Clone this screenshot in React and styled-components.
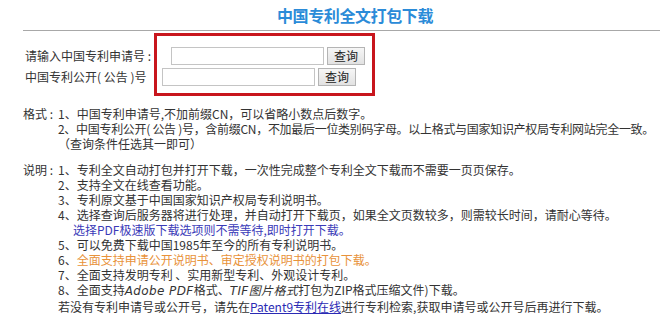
import React from "react";
import styled, { createGlobalStyle } from "styled-components";

const GlobalStyle = createGlobalStyle`
  html, body {
    margin: 0;
    padding: 0;
    background: #fff;
  }
  body {
    font-family: "Microsoft YaHei", "Noto Sans CJK SC", "Noto Sans", sans-serif;
    font-size: 12px;
    color: #333;
  }
`;

const Page = styled.div`
  width: 660px;
  height: 323px;
  overflow: hidden;
  padding-top: 6px;
  box-sizing: border-box;
`;

const Title = styled.h1`
  margin: 0 0 0 277px;
  font-size: 16px;
  line-height: 19px;
  font-weight: bold;
  letter-spacing: -0.4px;
  color: #2b8bd8;
`;

const Rule = styled.hr`
  margin: 5px 0 0 23px;
  border: 0;
  border-top: 1px solid #a8a8a8;
  height: 0;
`;

const Form = styled.div`
  display: flex;
  margin-top: 2px;
`;

const Labels = styled.div`
  display: flex;
  flex-direction: column;
  gap: 3px;
  width: 129px;
  padding: 14px 0 0 25px;
`;

const Label = styled.div`
  height: 18px;
  line-height: 18px;
  white-space: nowrap;
`;

const RedBox = styled.div`
  box-sizing: border-box;
  width: 221px;
  height: 63px;
  border: 3px solid #c8161d;
  padding-top: 11px;
  display: flex;
  flex-direction: column;
  gap: 3px;
`;

const InputRow = styled.div`
  display: flex;
  gap: 3px;
  padding-left: ${(p) => p.$indent}px;
`;

const TextInput = styled.input`
  width: 153px;
  height: 18px;
  box-sizing: border-box;
  border: 1px solid #c4c4c4;
  background: #fff;
  margin: 0;
  padding: 0 2px;
`;

const QueryButton = styled.button`
  width: 38px;
  height: 18px;
  padding: 0;
  margin: 0;
  border: 1px solid #b4b4b4;
  background: linear-gradient(#f6f6f6, #e2e2e2);
  font-family: inherit;
  font-size: 12px;
  line-height: 16px;
  color: #222;
`;

const Section = styled.div`
  display: grid;
  grid-template-columns: 35px 1fr;
  margin-top: ${(p) => p.$top}px;
  padding-left: 23px;
  line-height: 15px;
`;

const Lines = styled.div`
  display: flex;
  flex-direction: column;
`;

const Line = styled.div`
  white-space: nowrap;
  padding-left: ${(p) => p.$indent || 0}px;
  letter-spacing: ${(p) => p.$tight || 0}px;
  color: ${(p) => p.$color || "#333"};
`;

const Orange = styled.span`
  color: #e8923a;
`;

const Em = styled.i`
  font-style: italic;
  font-family: "DejaVu Sans", "Noto Sans CJK SC", sans-serif;
  letter-spacing: 0.4px;
`;

const Link = styled.a`
  color: #2a2ab4;
  text-decoration: underline;
`;

export default function App() {
  return (
    <>
      <GlobalStyle />
      <Page>
        <Title>中国专利全文打包下载</Title>
        <Rule />
        <Form>
          <Labels>
            <Label>请输入中国专利申请号 :</Label>
            <Label>中国专利公开( 公告 )号</Label>
          </Labels>
          <RedBox>
            <InputRow $indent={14}>
              <TextInput />
              <QueryButton>查询</QueryButton>
            </InputRow>
            <InputRow $indent={5}>
              <TextInput />
              <QueryButton>查询</QueryButton>
            </InputRow>
          </RedBox>
        </Form>

        <Section $top={10}>
          <span>格式 :</span>
          <Lines>
            <Line>1、中国专利申请号,不加前缀CN，可以省略小数点后数字。</Line>
            <Line $tight={-0.3}>
              2、中国专利公开( 公告 )号，含前缀CN，不加最后一位类别码字母。以上格式与国家知识产权局专利网站完全一致。
            </Line>
            <Line>（查询条件任选其一即可）</Line>
          </Lines>
        </Section>

        <Section $top={11}>
          <span>说明 :</span>
          <Lines>
            <Line>1、专利全文自动打包并打开下载，一次性完成整个专利全文下载而不需要一页页保存。</Line>
            <Line>2、支持全文在线查看功能。</Line>
            <Line>3、专利原文基于中国国家知识产权局专利说明书。</Line>
            <Line>4、选择查询后服务器将进行处理，并自动打开下载页，如果全文页数较多，则需较长时间，请耐心等待。</Line>
            <Line $indent={15} $color="#3a3ab8">选择PDF极速版下载选项则不需等待,即时打开下载。</Line>
            <Line>5、可以免费下载中国1985年至今的所有专利说明书。</Line>
            <Line>
              6、<Orange>全面支持申请公开说明书、审定授权说明书的打包下载。</Orange>
            </Line>
            <Line>7、全面支持发明专利 、实用新型专利、外观设计专利。</Line>
            <Line>
              8、全面支持<Em>Adobe PDF</Em>格式、<Em>TIF图片格式</Em>打包为ZIP格式压缩文件)下载。
            </Line>
            <Line>
              若没有专利申请号或公开号，请先在<Link href="#">Patent9专利在线</Link>进行专利检索,获取申请号或公开号后再进行下载。
            </Line>
          </Lines>
        </Section>
      </Page>
    </>
  );
}
